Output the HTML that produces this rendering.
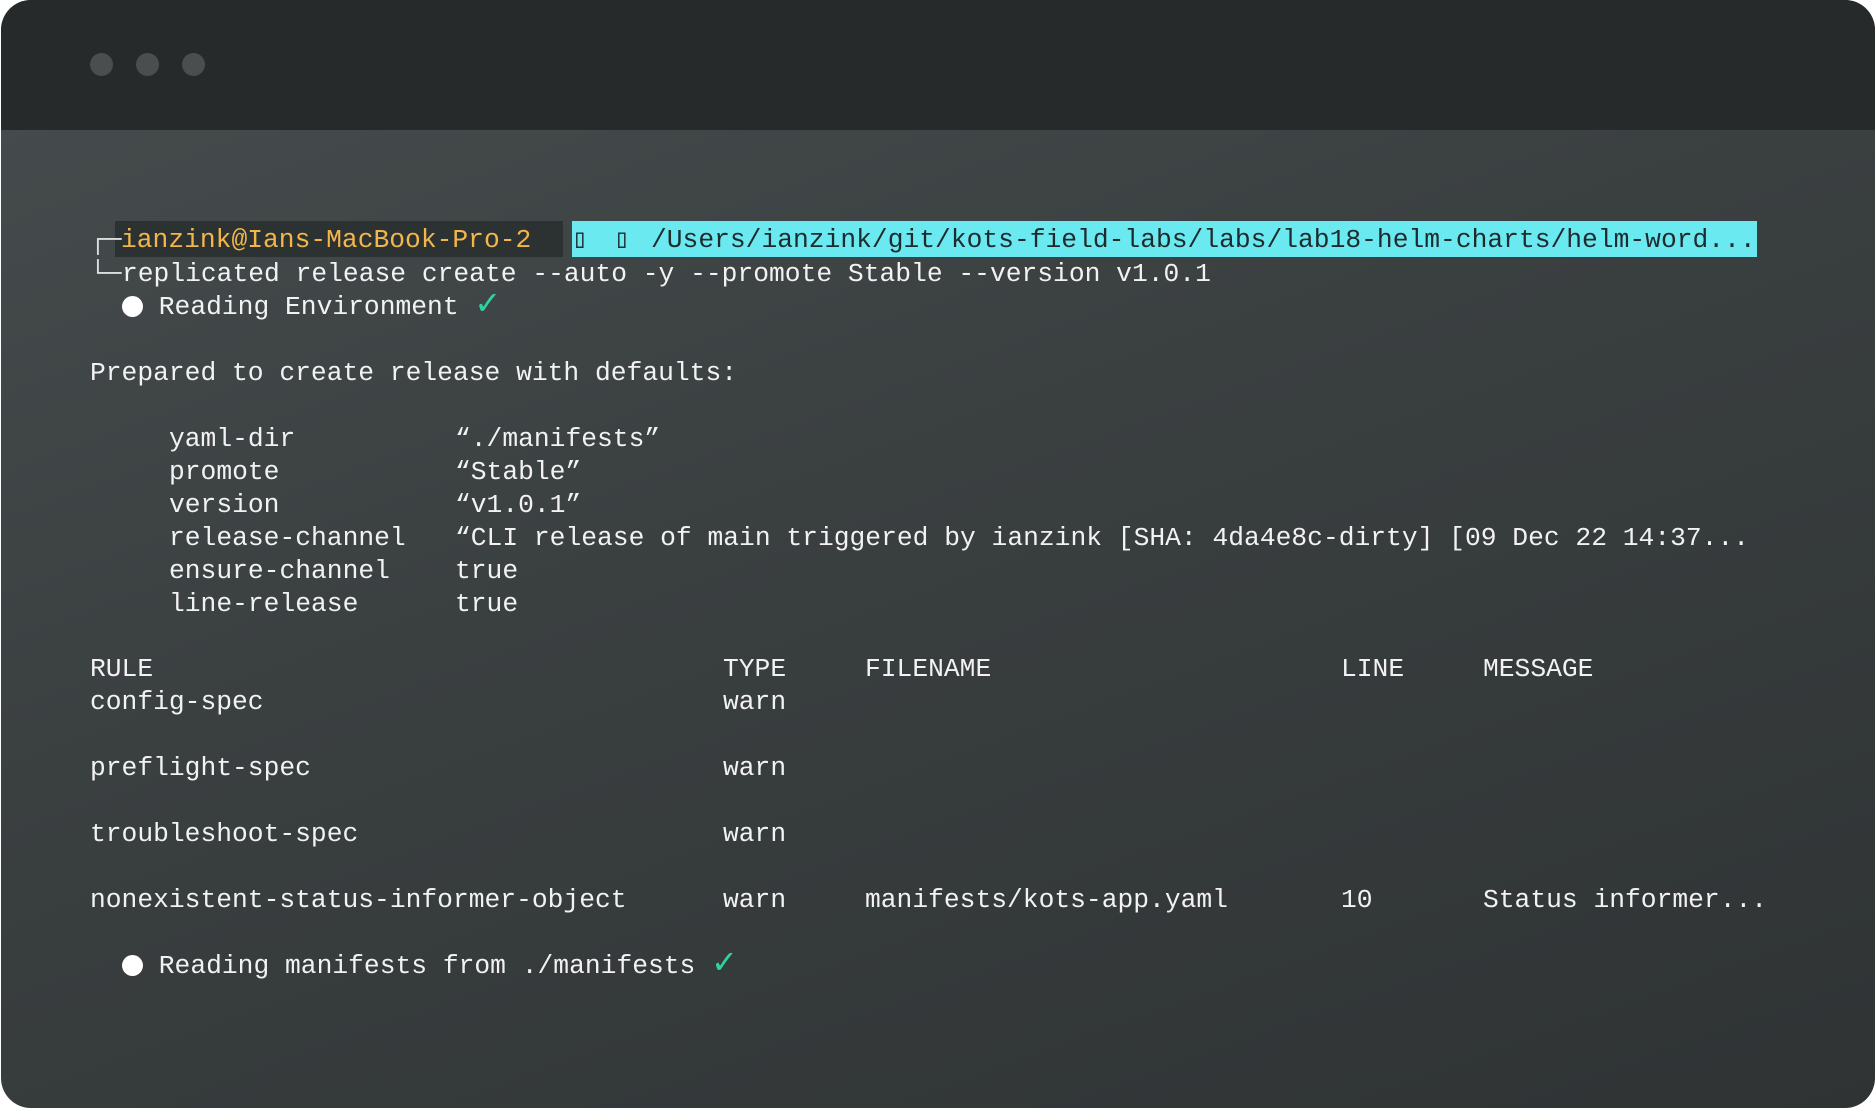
<!DOCTYPE html>
<html><head><meta charset="utf-8"><style>
html,body{margin:0;padding:0;background:#fff;width:1876px;height:1109px;overflow:hidden}
.win{position:absolute;left:1px;top:0;width:1874px;height:1108px;border-radius:30px;overflow:hidden;background:linear-gradient(160deg,#474d4e 0%,#3a3f40 45%,#2f3334 100%)}
.hdr{position:absolute;left:0;top:0;width:100%;height:130px;background:#262a2b}
.dot{position:absolute;top:53px;width:23px;height:23px;border-radius:50%;background:#4a4e4f}
.l{position:absolute;font-family:"Liberation Mono",monospace;font-size:26.3px;line-height:33px;color:#f2f2f2;white-space:pre}
.y{color:#f2b64a}
.c{color:#1e2b2e}
.g{color:#2fd3a3;font-size:32px;font-family:"DejaVu Sans",sans-serif;line-height:20px}
.b{display:inline-block;width:21px;height:21px;border-radius:50%;background:#fff;vertical-align:-3px}
</style></head><body>
<div class="win">
<div class="hdr"></div>
<div class="dot" style="left:89px"></div>
<div class="dot" style="left:135px"></div>
<div class="dot" style="left:181px"></div>
<div style="position:absolute;left:114px;top:221px;width:448px;height:36px;background:#2c3132"></div>
<div style="position:absolute;left:571px;top:221px;width:1185px;height:36px;background:#6be9f0"></div>
<div class="l" style="left:89px;top:224px;color:#ddd">┌─</div>
<div class="l" style="left:120px;top:224px"><span class="y">ianzink@Ians-MacBook-Pro-2</span></div>
<div class="l c" style="left:571px;top:224px">▯</div>
<div class="l c" style="left:613px;top:224px">▯</div>
<div class="l c" style="left:650px;top:224px">/Users/ianzink/git/kots-field-labs/labs/lab18-helm-charts/helm-word...</div>
<div class="l" style="left:89px;top:258px;color:#ddd">└─</div>
<div class="l" style="left:121px;top:258px">replicated release create --auto -y --promote Stable --version v1.0.1</div>
<div class="l" style="left:121px;top:291px"><span class="b"></span> Reading Environment <span class="g">✓</span></div>
<div class="l" style="left:89px;top:357px">Prepared to create release with defaults:</div>
<div class="l" style="left:168px;top:423px">yaml-dir</div><div class="l" style="left:454px;top:423px">“./manifests”</div>
<div class="l" style="left:168px;top:456px">promote</div><div class="l" style="left:454px;top:456px">“Stable”</div>
<div class="l" style="left:168px;top:489px">version</div><div class="l" style="left:454px;top:489px">“v1.0.1”</div>
<div class="l" style="left:168px;top:522px">release-channel</div><div class="l" style="left:454px;top:522px">“CLI release of main triggered by ianzink [SHA: 4da4e8c-dirty] [09 Dec 22 14:37...</div>
<div class="l" style="left:168px;top:555px">ensure-channel</div><div class="l" style="left:454px;top:555px">true</div>
<div class="l" style="left:168px;top:588px">line-release</div><div class="l" style="left:454px;top:588px">true</div>
<div class="l" style="left:89px;top:653px">RULE</div><div class="l" style="left:722px;top:653px">TYPE</div><div class="l" style="left:864px;top:653px">FILENAME</div><div class="l" style="left:1340px;top:653px">LINE</div><div class="l" style="left:1482px;top:653px">MESSAGE</div>
<div class="l" style="left:89px;top:686px">config-spec</div><div class="l" style="left:722px;top:686px">warn</div>
<div class="l" style="left:89px;top:752px">preflight-spec</div><div class="l" style="left:722px;top:752px">warn</div>
<div class="l" style="left:89px;top:818px">troubleshoot-spec</div><div class="l" style="left:722px;top:818px">warn</div>
<div class="l" style="left:89px;top:884px">nonexistent-status-informer-object</div><div class="l" style="left:722px;top:884px">warn</div><div class="l" style="left:864px;top:884px">manifests/kots-app.yaml</div><div class="l" style="left:1340px;top:884px">10</div><div class="l" style="left:1482px;top:884px">Status informer...</div>
<div class="l" style="left:121px;top:950px"><span class="b"></span> Reading manifests from ./manifests <span class="g">✓</span></div>
</div>
</body></html>
